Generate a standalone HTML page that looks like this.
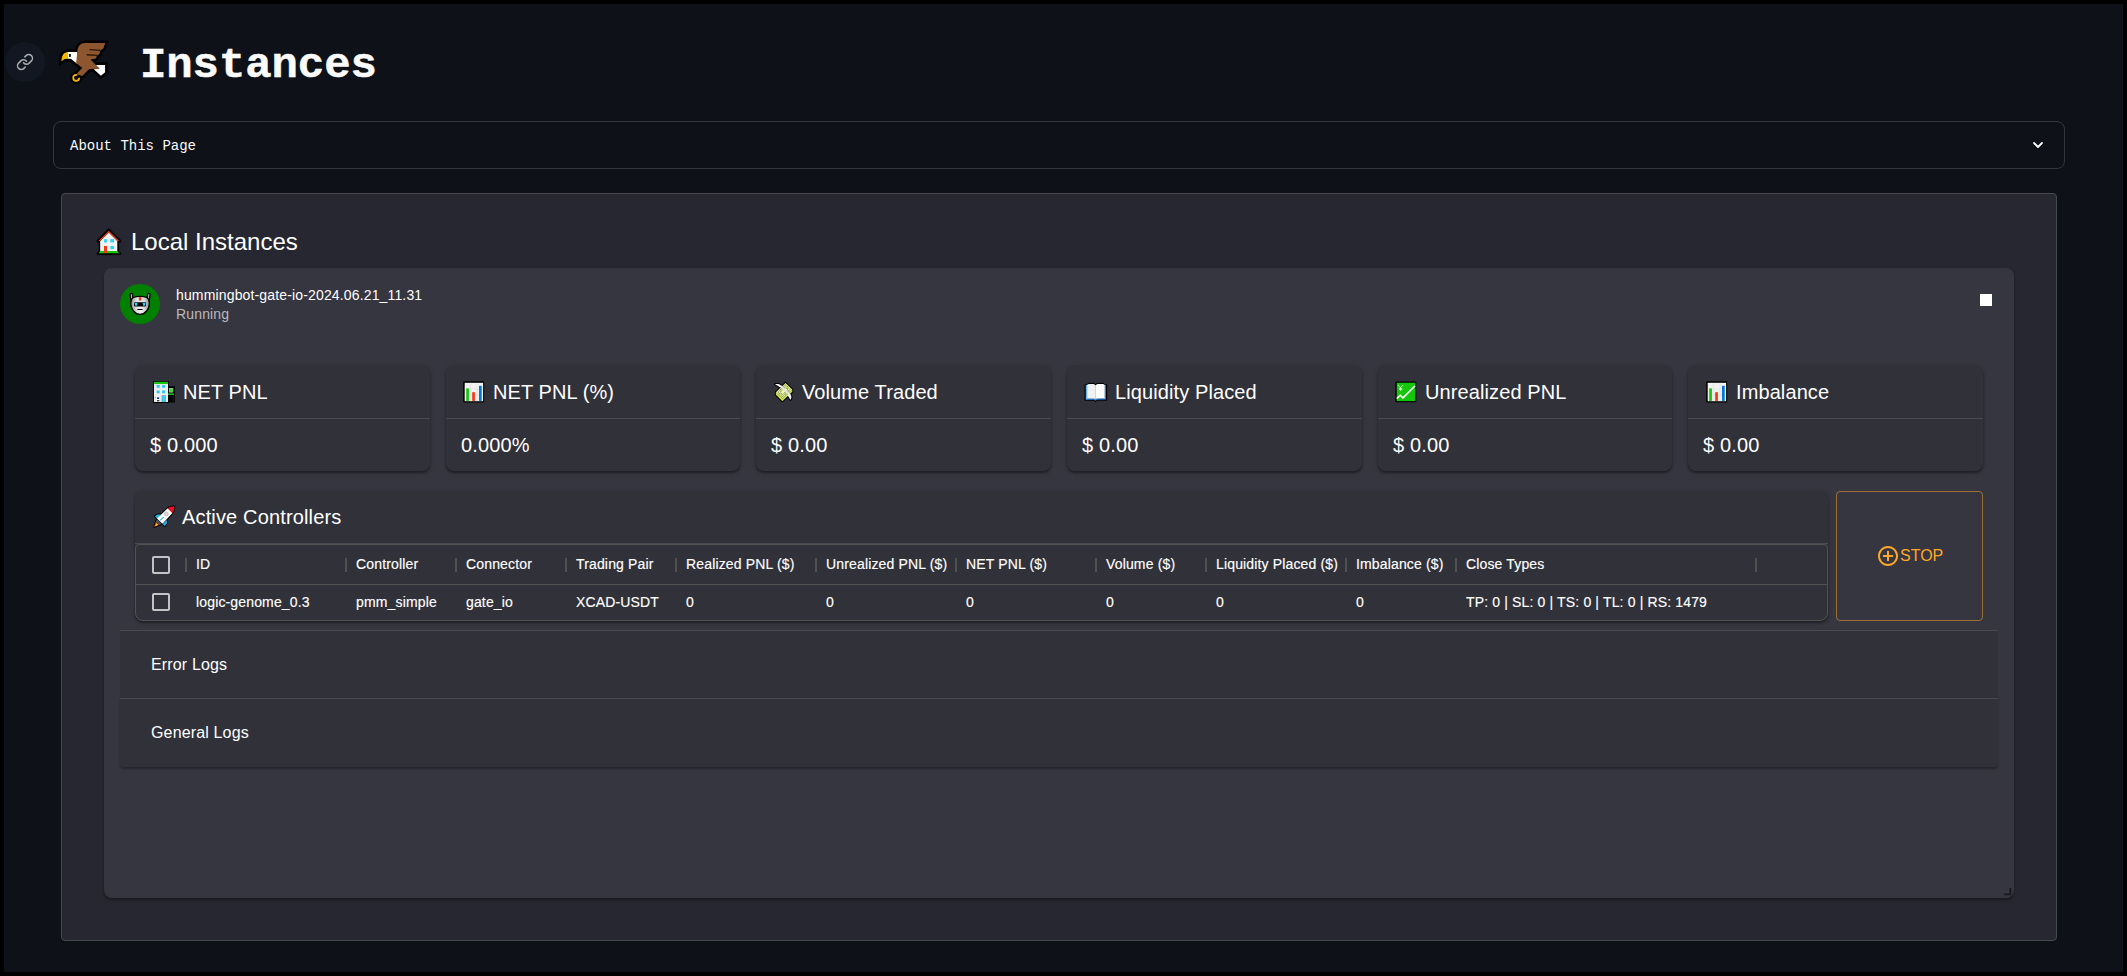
<!DOCTYPE html>
<html lang="en">
<head>
<meta charset="utf-8">
<title>Instances</title>
<style>
*{box-sizing:border-box;margin:0;padding:0}
html,body{width:2127px;height:976px;overflow:hidden;background:#000}
body{position:relative;font-family:"Liberation Sans",Arial,sans-serif;color:#fff}
.abs{position:absolute}
#page{position:absolute;left:4px;top:4px;width:2119px;height:968px;background:#0e1117;overflow:hidden}
/* everything below is positioned in full-screenshot coordinates via #stage */
#stage{position:absolute;left:-4px;top:-4px;width:2127px;height:976px}
.mono{font-family:"Liberation Mono","DejaVu Sans Mono",monospace}
#linkbtn{left:5px;top:42px;width:40px;height:40px;border-radius:50%;background:#131721}
#linkbtn svg{position:absolute;left:11px;top:11px;width:18px;height:18px}
#title{left:140px;top:32px;font-size:44px;font-weight:700;line-height:66px;color:#fafafa;white-space:nowrap;letter-spacing:-.1px;-webkit-text-stroke:.5px #fafafa;transform:scaleY(.96);transform-origin:0 45px}
#expander{left:53px;top:121px;width:2012px;height:48px;border:1px solid #34363d;border-radius:8px}
#expander .lbl{position:absolute;left:16px;top:1px;line-height:46px;font-size:14px;color:#fafafa;white-space:nowrap}
#panel{left:61px;top:193px;width:1996px;height:748px;background:#262730;border:1px solid #45464e;border-radius:4px}
#h5{left:131px;top:226px;font-size:24px;line-height:32px;white-space:nowrap}
#card{left:104px;top:268px;width:1910px;height:630px;background:#363640;border-radius:8px;box-shadow:0 2px 3px rgba(0,0,0,.35)}
#avatar{left:120px;top:284px;width:40px;height:40px;border-radius:50%;background:#008000}
#ttl{left:176px;top:285px;font-size:14px;line-height:20px;white-space:nowrap;letter-spacing:.15px}
#sub{left:176px;top:304px;font-size:14px;line-height:20px;color:#b9b9bd;white-space:nowrap;letter-spacing:.15px}
#stopsq{left:1980px;top:294px;width:12px;height:12px;background:#fff}
.paper{background:#31313a;border-radius:8px;box-shadow:0 2px 2px rgba(0,0,0,.3),0 1px 4px rgba(0,0,0,.25)}
.metric{top:366px;width:295px;height:105px}
.metric .hd{position:absolute;left:48px;top:10px;font-size:20px;line-height:32px;white-space:nowrap;letter-spacing:.1px}
.metric .dv{position:absolute;left:0;right:0;top:52px;height:1px;background:#4a4a52}
.metric .val{position:absolute;left:15px;top:63px;font-size:20px;line-height:32px;white-space:nowrap;letter-spacing:.15px}
.metric svg{position:absolute}
#ctrl{left:135px;top:491px;width:1693px;height:130px}
#ctrl .hd{position:absolute;left:47px;top:10px;font-size:20px;line-height:32px;white-space:nowrap;letter-spacing:.15px}
#grid{position:absolute;left:0;top:53px;width:1693px;height:77px;border:1px solid #515151;border-radius:4px 4px 8px 8px}
#grid .hline{position:absolute;left:0;right:0;top:39px;height:1px;background:#515151}
.sep{position:absolute;top:13px;width:2px;height:14px;background:#515151}
.th,.td{position:absolute;font-size:14px;white-space:nowrap;color:#fff;letter-spacing:.15px;-webkit-text-stroke:.15px #fff}
.th{top:0;line-height:39px}
.td{top:39px;line-height:36px}
.cb{position:absolute;left:16px;width:18px;height:18px;border:2px solid #c3c3c6;border-radius:2px}
#stopbtn{left:1836px;top:491px;width:147px;height:130px;border:1px solid rgba(255,167,38,.5);border-radius:4px;color:#ffa726}
#stopbtn svg{position:absolute;left:39px;top:52px;width:24px;height:24px;fill:#ffa726}
#stopbtn span{position:absolute;left:63px;top:52px;font-size:16px;line-height:24px}
.acc{left:120px;width:1878px;height:69px;background:#31313a}
.acc span{position:absolute;left:31px;top:0;line-height:68px;font-size:16px;white-space:nowrap;letter-spacing:.15px}
</style>
</head>
<body>
<div id="page"><div id="stage">

<div id="linkbtn" class="abs"><svg viewBox="0 0 24 24" fill="none" stroke="#a9abb0" stroke-width="2" stroke-linecap="round" stroke-linejoin="round"><path d="M10 13a5 5 0 0 0 7.54.54l3-3a5 5 0 0 0-7.07-7.07l-1.72 1.71"/><path d="M14 11a5 5 0 0 0-7.54-.54l-3 3a5 5 0 0 0 7.07 7.07l1.71-1.71"/></svg></div>

<!--EAGLE--><svg class="abs" style="left:50px;top:30px;width:80px;height:70px" viewBox="0 0 1115 976">
<g fill="#000" stroke="#000" stroke-width="72" stroke-linejoin="miter" stroke-miterlimit="2.6">
<path d="M480 182H770L745 255L700 290L688 335L652 362L640 398L565 412L690 540L545 545L450 640L385 620L380 600L450 530L365 460L380 305C385 230 420 190 480 182Z"/>
<path d="M250 308L380 305L380 470L290 402L250 402Z"/>
<path d="M250 308C190 310 160 360 160 435L205 405L250 402Z"/>
<path d="M645 487H768V590L710 637L610 548L690 540Z"/>
<circle cx="365" cy="667" r="50"/>
</g>
<path d="M250 308L382 305L382 475L290 402L250 402Z" fill="#fff"/>
<path d="M252 308C190 310 160 360 160 435L205 405L252 402Z" fill="#f7b500"/>
<rect x="265" y="335" width="26" height="40" fill="#111"/>
<path d="M640 487H768V590L710 637L610 548L690 540Z" fill="#fff"/>
<circle cx="365" cy="667" r="42" fill="#0a0a0a" stroke="#f7b500" stroke-width="24" stroke-dasharray="216 48" stroke-dashoffset="7"/>
<path d="M480 182H770L745 255L700 290L688 335L652 362L640 398L565 412L690 540L545 545L450 640L385 620L380 600L450 530L365 460L380 305C385 230 420 190 480 182Z" fill="#8e562e"/>
<path d="M552 274L706 284M512 346L660 354" stroke="#2a1608" stroke-width="20" fill="none"/>
</svg><!--/EAGLE-->

<div id="title" class="abs mono">Instances</div>

<div id="expander" class="abs"><div class="lbl mono">About This Page</div>
<svg class="abs" style="left:1976px;top:14.5px;width:16px;height:16px" viewBox="0 0 16 16" fill="none" stroke="#fafafa" stroke-width="1.8" stroke-linecap="round" stroke-linejoin="round"><path d="M4 6l4 4 4-4"/></svg>
</div>

<div id="panel" class="abs"></div>
<!--HOUSE--><svg class="abs" style="left:92px;top:222px;width:36px;height:38px" viewBox="0 0 925 976">
<path d="M430 160L740 470V520H690V760L740 790V840H130V790L180 760V520H130V470Z" fill="#000" stroke="#000" stroke-width="14" stroke-linejoin="round"/>
<path d="M430 268L650 488V770H210V488Z" fill="#f2f2f2"/>
<path d="M430 222L700 490H652L430 270L208 490H165Z" fill="#f03a17"/>
<rect x="310" y="440" width="76" height="86" fill="#31d2f7"/><rect x="470" y="440" width="96" height="86" fill="#31d2f7"/><rect x="470" y="615" width="96" height="80" fill="#31d2f7"/>
<path d="M170 800L215 748H650L700 800Z" fill="#16c60c"/>
<rect x="308" y="615" width="78" height="180" fill="#f03a17"/>
</svg><!--/HOUSE-->
<div id="h5" class="abs">Local Instances</div>

<div id="card" class="abs"></div>
<div id="avatar" class="abs"></div>
<!--ROBOT--><svg class="abs" style="left:115px;top:280px;width:50px;height:48px" viewBox="0 0 1017 976">
<defs><linearGradient id="rg" x1="0" y1="0" x2="1" y2="0"><stop offset="0" stop-color="#8c8c8c"/><stop offset=".28" stop-color="#dcdcdc"/><stop offset=".5" stop-color="#f0f0f0"/><stop offset=".72" stop-color="#dcdcdc"/><stop offset="1" stop-color="#8c8c8c"/></linearGradient></defs>
<g stroke="#000" stroke-width="26" stroke-linejoin="round" fill="#b5b5b5">
<path d="M306 300a26 26 0 0 1 52 0L364 440H326Z"/>
<path d="M662 300a26 26 0 0 1 52 0L694 440H656Z"/>
<path d="M332 410C347 350 420 335 510 335S673 350 688 410C710 480 690 570 645 630C600 685 560 697 510 697S420 685 375 630C330 570 310 480 332 410Z" fill="url(#rg)"/>
</g>
<rect x="485" y="345" width="50" height="78" rx="22" fill="#f03a17"/>
<rect x="388" y="450" width="244" height="88" rx="20" fill="#000"/>
<rect x="406" y="465" width="46" height="60" rx="10" fill="#31d2f7"/><rect x="568" y="465" width="46" height="60" rx="10" fill="#31d2f7"/>
<rect x="452" y="592" width="112" height="16" rx="8" fill="#000"/>
</svg><!--/ROBOT-->
<div id="ttl" class="abs">hummingbot-gate-io-2024.06.21_11.31</div>
<div id="sub" class="abs">Running</div>
<div id="stopsq" class="abs"></div>

<div class="abs paper metric" style="left:135px"><!--I1--><svg style="left:13px;top:10px;width:32px;height:32px" viewBox="0 0 976 976">
<rect x="152" y="150" width="490" height="672" rx="12" fill="#000"/><rect x="600" y="312" width="222" height="500" rx="12" fill="#000"/>
<rect x="182" y="180" width="428" height="612" fill="#ededed"/><rect x="182" y="180" width="428" height="66" fill="#16c60c"/>
<rect x="265" y="275" width="92" height="86" rx="12" fill="#1fcbf4"/><rect x="430" y="275" width="92" height="86" rx="12" fill="#1fcbf4"/><rect x="265" y="440" width="92" height="86" rx="12" fill="#1fcbf4"/><rect x="430" y="440" width="92" height="86" rx="12" fill="#1fcbf4"/>
<rect x="418" y="590" width="124" height="202" rx="10" fill="#8a8a8a"/><rect x="436" y="606" width="90" height="186" fill="#31d2f7"/>
<rect x="258" y="636" width="96" height="156" fill="#fff"/><rect x="275" y="650" width="66" height="52" fill="#0037da"/><rect x="272" y="738" width="74" height="34" fill="#111"/>
<rect x="204" y="644" width="36" height="36" rx="10" fill="#3fd43f"/>
<rect x="640" y="368" width="132" height="134" rx="14" fill="#bdbdbd"/><rect x="654" y="382" width="104" height="106" rx="8" fill="#3fd43f"/>
<rect x="610" y="530" width="182" height="46" fill="#16c60c"/><rect x="758" y="580" width="16" height="200" fill="#444"/>
</svg><!--/I1--><div class="hd">NET PNL</div><div class="dv"></div><div class="val">$ 0.000</div></div>
<div class="abs paper metric" style="left:446px;width:294px"><!--I2--><svg style="left:14px;top:12px;width:28px;height:28px" viewBox="0 0 28 28">
<rect x="3.2" y="3.3" width="21" height="21.1" rx="1.2" fill="#000"/><rect x="4.7" y="4.8" width="18.4" height="18.4" fill="#f2f2f2"/>
<path d="M10.8 4.8V23.2M17 4.8V23.2M4.7 10.9H23.1M4.7 17H23.1" stroke="#dedede" stroke-width=".6" fill="none"/>
<rect x="6.2" y="10.4" width="2.7" height="12.5" fill="#16c60c"/><rect x="12.2" y="14.2" width="2.7" height="8.7" fill="#f03a17"/><rect x="19" y="7.8" width="2.7" height="15.1" fill="#0078d7"/>
</svg><!--/I2--><div class="hd" style="left:47px">NET PNL (%)</div><div class="dv"></div><div class="val">0.000%</div></div>
<div class="abs paper metric" style="left:756px"><!--I3--><svg style="left:12px;top:10px;width:32px;height:32px" viewBox="0 0 976 976">
<g stroke="#000" stroke-width="62" stroke-linejoin="round" fill="#000">
<path d="M535 210L740 410V480L440 770L240 570V495Z"/>
<path d="M215 255C270 232 345 236 388 283L410 350L350 332C310 302 255 292 215 255Z"/>
<path d="M635 560L705 595C722 645 712 700 680 728C655 690 650 640 598 602Z"/>
</g>
<path d="M240 495L440 690L740 410V480L440 770L240 570Z" fill="#c9e03e"/>
<path d="M535 210L740 410L440 690L240 495Z" fill="#e6f08c"/>
<path d="M535 270L678 410L440 630L302 495Z" fill="none" stroke="#585c54" stroke-width="28" stroke-dasharray="38 24"/>
<path d="M535 335L612 410L440 568L368 495Z" fill="#f2f8b0" stroke="#585c54" stroke-width="26" stroke-dasharray="38 24"/>
<circle cx="560" cy="380" r="18" fill="#6bbf1a"/><circle cx="410" cy="535" r="18" fill="#6bbf1a"/>
<path d="M385 300L680 590" stroke="#e4e4ee" stroke-width="58" fill="none"/>
<path d="M215 255C270 232 345 236 388 283L410 350L350 332C310 302 255 292 215 255Z" fill="#fff"/>
<path d="M635 560L705 595C722 645 712 700 680 728C655 690 650 640 598 602Z" fill="#fff"/>
</svg><!--/I3--><div class="hd" style="left:46px">Volume Traded</div><div class="dv"></div><div class="val">$ 0.00</div></div>
<div class="abs paper metric" style="left:1067px"><!--I4--><svg style="left:12px;top:10px;width:32px;height:32px" viewBox="0 0 976 976">
<path d="M175 262L250 262C250 230 290 215 330 215H420C460 215 490 230 505 262C520 230 550 215 590 215H700C740 215 775 230 780 262H855V748H560L505 790L450 748H175Z" fill="#000" stroke="#000" stroke-width="10" stroke-linejoin="round"/>
<defs><linearGradient id="bk" x1="0" y1="0" x2="1" y2="0"><stop offset="0" stop-color="#74bdf7"/><stop offset=".12" stop-color="#3a8fe0"/><stop offset="1" stop-color="#0f5fb8"/></linearGradient></defs>
<path d="M207 275H823V722H560L505 752L450 722H207Z" fill="url(#bk)"/>
<path d="M250 275C250 250 300 243 340 243H410C460 243 490 262 505 300V690C470 672 440 668 400 668H250Z" fill="#f1f1f1"/>
<path d="M505 300C520 262 550 243 600 243H690C740 243 778 250 780 275V668H610C570 668 540 672 505 690Z" fill="#fff"/>
<path d="M780 275H800V690H780Z" fill="#d6d9dd"/>
<path d="M250 668H400C440 668 470 672 505 690C540 672 570 668 610 668H800V690H610C570 690 540 694 505 712C470 694 440 690 400 690H250Z" fill="#e9e4de"/>
</svg><!--/I4--><div class="hd">Liquidity Placed</div><div class="dv"></div><div class="val">$ 0.00</div></div>
<div class="abs paper metric" style="left:1378px;width:294px"><!--I5--><svg style="left:12px;top:10px;width:32px;height:32px" viewBox="0 0 976 976">
<rect x="165" y="165" width="636" height="636" rx="14" fill="#000"/><rect x="206" y="206" width="564" height="560" fill="#16c60c"/>
<path d="M206 690L312 588L396 668L768 298" fill="none" stroke="#fff" stroke-width="46"/>
<path d="M250 282L320 360L392 282M320 360V440M282 385H360M282 418H360" fill="none" stroke="#eafbe8" stroke-width="24" stroke-linecap="round"/>
</svg><!--/I5--><div class="hd" style="left:47px">Unrealized PNL</div><div class="dv"></div><div class="val">$ 0.00</div></div>
<div class="abs paper metric" style="left:1688px"><!--I6--><svg style="left:15px;top:12px;width:28px;height:28px" viewBox="0 0 28 28">
<rect x="3.2" y="3.3" width="21" height="21.1" rx="1.2" fill="#000"/><rect x="4.7" y="4.8" width="18.4" height="18.4" fill="#f2f2f2"/>
<path d="M10.8 4.8V23.2M17 4.8V23.2M4.7 10.9H23.1M4.7 17H23.1" stroke="#dedede" stroke-width=".6" fill="none"/>
<rect x="6.2" y="10.4" width="2.7" height="12.5" fill="#16c60c"/><rect x="12.2" y="14.2" width="2.7" height="8.7" fill="#f03a17"/><rect x="19" y="7.8" width="2.7" height="15.1" fill="#0078d7"/>
</svg><!--/I6--><div class="hd">Imbalance</div><div class="dv"></div><div class="val">$ 0.00</div></div>

<div id="ctrl" class="abs paper"><!--ROCKET--><svg class="abs" style="left:13px;top:9px;width:32px;height:32px" viewBox="0 0 976 976">
<g stroke="#000" stroke-width="60" stroke-linejoin="round" fill="#000">
<path d="M600 250C680 200 750 195 805 200C805 270 790 340 745 400L440 728L275 565Z"/>
<path d="M210 500L285 440H390L280 565Z"/><path d="M450 730L572 610L582 700L512 792Z"/>
<path d="M270 580L420 730L340 762L190 822L240 662Z"/>
</g>
<path d="M270 580L420 730L340 765L240 662Z" fill="#46525c"/>
<path d="M240 668L336 762L188 824Z" fill="#f7630c"/><path d="M255 712L300 760L225 790Z" fill="#ffc83d"/>
<path d="M210 500L285 440H395L285 570Z" fill="#1fb6ea"/><path d="M445 735L572 608L582 700L512 792Z" fill="#1fb6ea"/>
<path d="M600 250L745 400L440 728L275 565Z" fill="#fff"/>
<path d="M600 250C680 200 750 195 805 200C805 270 790 340 745 400Z" fill="#e81224"/>
<circle cx="562" cy="425" r="72" fill="#c4c4c4"/><circle cx="562" cy="420" r="40" fill="#dcdcdc"/>
<path d="M382 608L468 530" stroke="#31b5e8" stroke-width="36" stroke-linecap="round" fill="none"/>
</svg><!--/ROCKET--><div class="hd">Active Controllers</div>
<div style="position:absolute;left:0;right:0;top:52px;height:1px;background:#4a4a51"></div>
<div id="grid">
<div class="hline"></div>
<div class="cb" style="top:11px"></div>
<div class="cb" style="top:48px"></div>
<div class="sep" style="left:49px"></div><div class="th" style="left:60px">ID</div><div class="td" style="left:60px">logic-genome_0.3</div>
<div class="sep" style="left:209px"></div><div class="th" style="left:220px">Controller</div><div class="td" style="left:220px">pmm_simple</div>
<div class="sep" style="left:319px"></div><div class="th" style="left:330px">Connector</div><div class="td" style="left:330px">gate_io</div>
<div class="sep" style="left:429px"></div><div class="th" style="left:440px">Trading Pair</div><div class="td" style="left:440px">XCAD-USDT</div>
<div class="sep" style="left:539px"></div><div class="th" style="left:550px">Realized PNL ($)</div><div class="td" style="left:550px">0</div>
<div class="sep" style="left:679px"></div><div class="th" style="left:690px">Unrealized PNL ($)</div><div class="td" style="left:690px">0</div>
<div class="sep" style="left:819px"></div><div class="th" style="left:830px">NET PNL ($)</div><div class="td" style="left:830px">0</div>
<div class="sep" style="left:959px"></div><div class="th" style="left:970px">Volume ($)</div><div class="td" style="left:970px">0</div>
<div class="sep" style="left:1069px"></div><div class="th" style="left:1080px">Liquidity Placed ($)</div><div class="td" style="left:1080px">0</div>
<div class="sep" style="left:1209px"></div><div class="th" style="left:1220px">Imbalance ($)</div><div class="td" style="left:1220px">0</div>
<div class="sep" style="left:1319px"></div><div class="th" style="left:1330px">Close Types</div><div class="td" style="left:1330px">TP: 0 | SL: 0 | TS: 0 | TL: 0 | RS: 1479</div>
<div class="sep" style="left:1619px"></div>
</div>
</div>

<div id="stopbtn" class="abs"><svg viewBox="0 0 24 24"><path d="M13 7h-2v4H7v2h4v4h2v-4h4v-2h-4V7zm-1-5C6.48 2 2 6.48 2 12s4.480 10 10 10 10-4.480 10-10S17.520 2 12 2zm0 18c-4.410 0-8-3.590-8-8s3.590-8 8-8 8 3.590 8 8-3.590 8-8 8z"/></svg><span>STOP</span></div>

<div class="abs acc" style="top:630px;border-top:1px solid #494950"><span>Error Logs</span></div>
<div class="abs acc" style="top:698px;border-top:1px solid #494950;border-radius:0 0 4px 4px;box-shadow:0 2px 2px rgba(0,0,0,.3)"><span>General Logs</span></div>

<svg class="abs" style="left:2003px;top:887px;width:9px;height:9px" viewBox="0 0 9 9" fill="none" stroke="#18181b" stroke-width="1.8"><path d="M1 7.4H7.4V1"/></svg>

</div></div>
</body>
</html>
